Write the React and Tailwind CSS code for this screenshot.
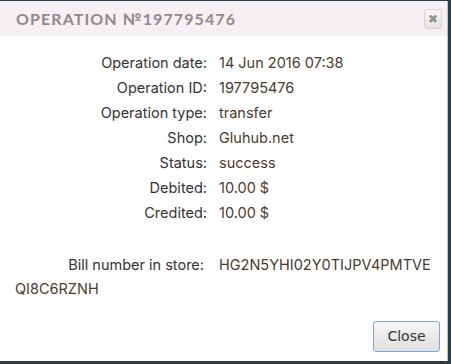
const rows = [
  ["Operation date:", "14 Jun 2016 07:38"],
  ["Operation ID:", "197795476"],
  ["Operation type:", "transfer"],
  ["Shop:", "Gluhub.net"],
  ["Status:", "success"],
  ["Debited:", "10.00 $"],
  ["Credited:", "10.00 $"],
];

const App = () => {
  return (
    <div className="h-[364px] w-[451px] overflow-hidden bg-[#2b3c49] pt-px">
      <div className="flex h-[360px] w-[448px] flex-col border-r border-[#bfc3c6] bg-white">
        <div className="flex h-[35px] items-center justify-between bg-[#f5f0f4] pl-[16px] pr-[5px]">
          <h1 className="font-['Lato',sans-serif] text-[16px] font-bold uppercase tracking-[1.1px] text-[#8e8a8d]">
            Operation №197795476
          </h1>
          <button
            type="button"
            className="flex h-[20px] w-[18px] items-center justify-center rounded-[3px] border border-[#d6d2d5] bg-gradient-to-b from-[#f6f6f6] to-[#e4e4e4] font-['DejaVu_Sans',sans-serif] text-[12px] leading-none text-[#8f8f8f]"
          >
            ✖
          </button>
        </div>

        <div className="flex-1 px-[15px] pt-[14px] font-['Inter',sans-serif] text-[14.5px] leading-[25px]">
          {rows.map(([label, value]) => (
            <div key={label} className="flex">
              <span className="w-[192px] text-right text-[#333]">{label}</span>
              <span className="ml-[12px] text-[#4a3b2f]">{value}</span>
            </div>
          ))}
          <p className="mt-[28px] break-all leading-[24px] text-[#4a3b2f]">
            <span className="mr-[15px] inline-block w-[189px] text-right text-[#333]">Bill number in store:</span>
            HG2N5YHI02Y0TIJPV4PMTVEQI8C6RZNH
          </p>
        </div>

        <div className="flex justify-end pb-[9px] pr-[7px]">
          <button
            type="button"
            className="h-[31px] w-[67px] rounded-[3px] border border-[#7fa6e3] bg-gradient-to-b from-[#f7f7f7] to-[#dedede] font-['DejaVu_Sans',sans-serif] text-[14px] text-[#333]"
          >
            Close
          </button>
        </div>
      </div>
    </div>
  );
};

export default App;
